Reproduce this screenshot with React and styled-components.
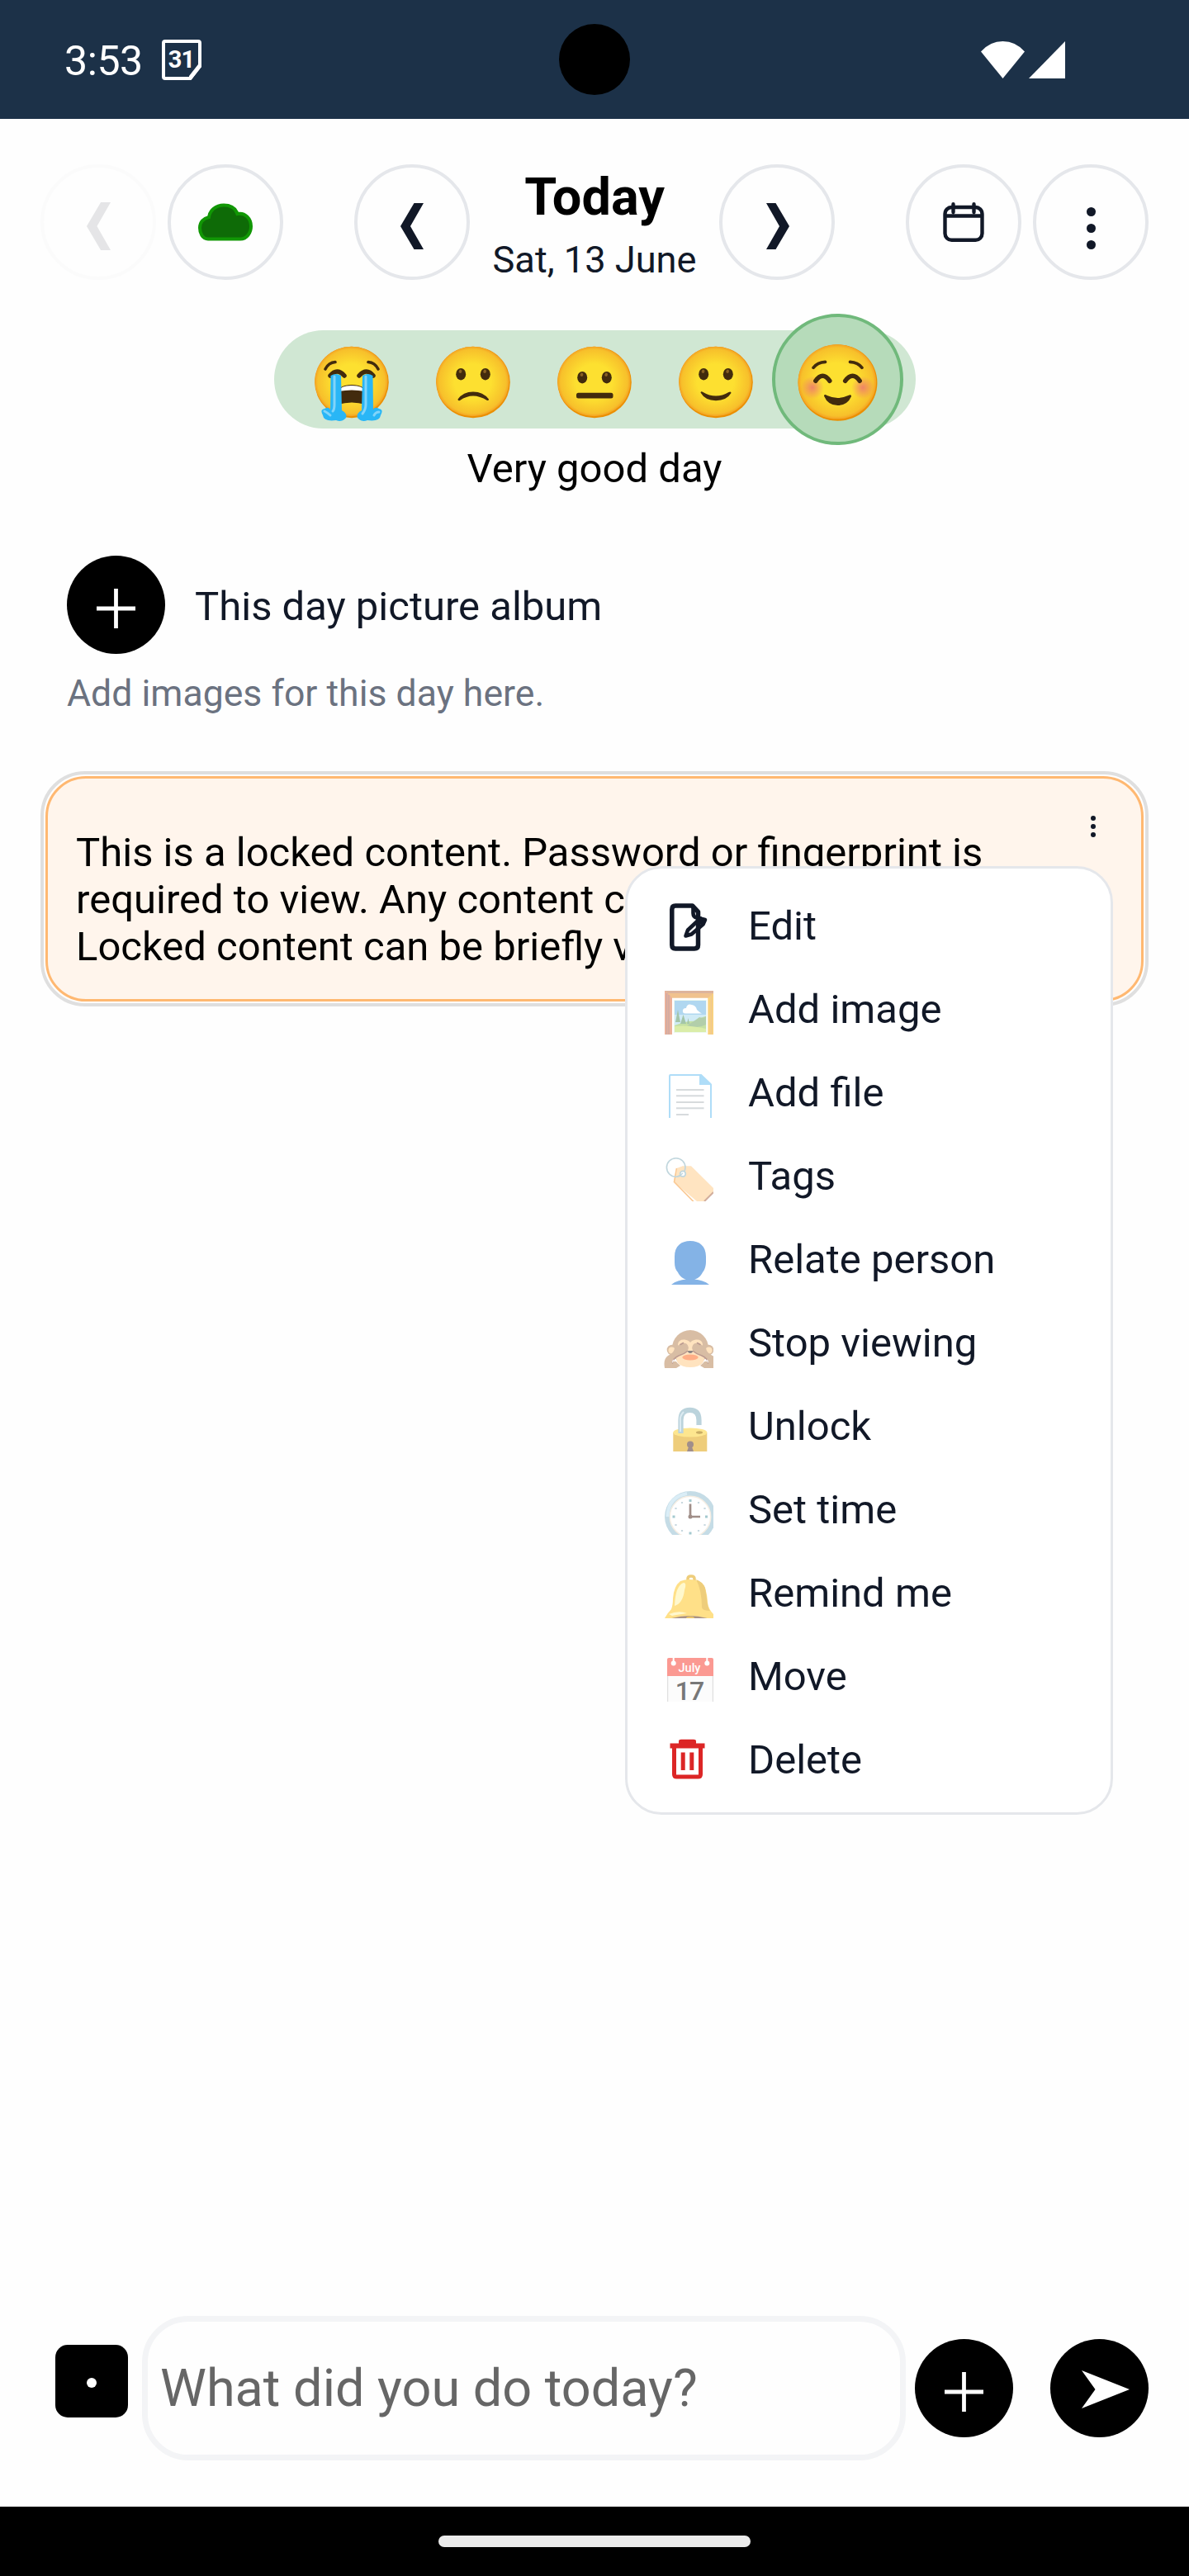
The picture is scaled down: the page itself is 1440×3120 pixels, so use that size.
import React from "react";
import styled, { createGlobalStyle } from "styled-components";

const INK = "#111827";

const GlobalStyle = createGlobalStyle`
  * { box-sizing: border-box; }
  body { margin: 0; background: #fefefe; font-family: Roboto, "Noto Sans", sans-serif; }
  svg { display: block; flex-shrink: 0; }
`;

const Screen = styled.div`
  display: flex;
  flex-direction: column;
  width: 1440px;
  height: 3120px;
  background: #fefefe;
  color: #000;
`;

const StatusBar = styled.header`
  position: relative;
  display: flex;
  align-items: center;
  justify-content: space-between;
  height: 144px;
  padding: 0 150px 0 78px;
  background: #1c3148;
  color: #fff;
`;

const StatusGroup = styled.div`
  display: flex;
  align-items: center;
  gap: ${(p) => p.$gap}px;
`;

const Clock = styled.span`
  padding-top: 4px;
  font-size: 50px;
  line-height: 60px;
  width: 93px;
  white-space: nowrap;
  letter-spacing: -0.4px;
`;

const Camera = styled.div`
  position: absolute;
  left: 677px;
  top: 29px;
  width: 86px;
  height: 86px;
  border-radius: 50%;
  background: #000;
`;

const Main = styled.main`
  flex: 1;
  display: flex;
  flex-direction: column;
  padding: 55px 49px 0;
`;

const TopBar = styled.nav`
  display: flex;
  align-items: flex-start;
  justify-content: space-between;
  height: 153px;
`;

const BarGroup = styled.div`
  display: flex;
  gap: ${(p) => p.$gap || 0}px;
`;

const RoundButton = styled.button`
  display: flex;
  align-items: center;
  justify-content: center;
  flex-shrink: 0;
  width: 140px;
  height: 140px;
  padding: 0;
  border: 4px solid #e5e7eb;
  border-radius: 50%;
  background: transparent;
  opacity: ${(p) => (p.$faded ? 0.1 : 1)};
`;

const DateBlock = styled.div`
  display: flex;
  flex-direction: column;
  align-items: center;
  width: 302px;
  white-space: nowrap;
`;

const DayName = styled.div`
  font-size: 63px;
  line-height: 79px;
  font-weight: 700;
`;

const DayDate = styled.div`
  font-size: 45.2px;
  line-height: 74px;
  color: ${INK};
`;

const MoodBar = styled.section`
  align-self: center;
  display: flex;
  align-items: center;
  justify-content: center;
  width: 777px;
  height: 119px;
  margin-top: 48px;
  border-radius: 60px;
  background: #d0e7d3;
`;

const MoodCell = styled.div`
  display: flex;
  align-items: center;
  justify-content: center;
  width: 147px;
  height: 119px;
  padding-top: ${(p) => (p.$selected ? 0 : 6)}px;
`;

const MoodRing = styled.div`
  display: flex;
  align-items: center;
  justify-content: center;
  flex-shrink: 0;
  width: 159px;
  height: 159px;
  padding-top: 7px;
  border: 4px solid #70b97b;
  border-radius: 50%;
  background: #b6dbba;
`;

const MoodLabel = styled.div`
  margin-top: 19px;
  text-align: center;
  font-size: 49px;
  line-height: 60px;
`;

const AlbumRow = styled.div`
  display: flex;
  align-items: center;
  gap: 36px;
  margin: 75px 0 0 32px;
`;

const BlackCircle = styled.button`
  display: flex;
  align-items: center;
  justify-content: center;
  flex-shrink: 0;
  width: 119px;
  height: 119px;
  padding: ${(p) => p.$drop}px 0 0;
  border: 0;
  border-radius: 50%;
  background: #000;
`;

const AlbumTitle = styled.div`
  padding-top: 5px;
  font-size: 49px;
  line-height: 60px;
  color: ${INK};
`;

const AlbumHint = styled.div`
  margin: 18px 0 0 32px;
  font-size: 44.6px;
  line-height: 60px;
  color: #6b7280;
`;

const LockedCard = styled.article`
  position: relative;
  height: 285px;
  margin-top: 64px;
  padding: 2px;
  border: 4px solid #dfdfdf;
  border-radius: 54px;
  background: #fefefe;
`;

const CardBody = styled.div`
  display: flex;
  align-items: flex-start;
  justify-content: space-between;
  height: 100%;
  padding: 62px 54px 0 34px;
  border: 3.4px solid #ffb871;
  border-radius: 49px;
  background: #fff5ec;
`;

const LockedText = styled.div`
  display: flex;
  flex-direction: column;
  font-size: 49px;
  line-height: 56.8px;
  white-space: nowrap;
`;

const CardDots = styled.div`
  margin-top: -17px;
`;

const Menu = styled.ul`
  position: absolute;
  left: 704px;
  top: 111px;
  width: 591px;
  height: 1149px;
  margin: 0;
  padding: 19px 0 0 44px;
  list-style: none;
  border: 3.5px solid #e5e7eb;
  border-radius: 44px;
  background: #fff;
`;

const MenuItem = styled.li`
  display: flex;
  align-items: center;
  gap: 42px;
  height: 101px;
  font-size: 49px;
  line-height: 60px;
  color: ${INK};
`;

const Composer = styled.footer`
  display: flex;
  align-items: center;
  height: 175px;
  margin-bottom: 56px;
  padding: 0 49px 0 67px;
`;

const RecordBox = styled.div`
  display: flex;
  align-items: center;
  justify-content: center;
  width: 88px;
  height: 88px;
  margin: 0 17px 17px 0;
  padding-top: 3px;
  border-radius: 15px;
  background: #000;
`;

const RecordDot = styled.i`
  width: 12px;
  height: 12px;
  border-radius: 50%;
  background: #fff;
`;

const Field = styled.div`
  width: 925px;
  height: 175px;
  margin-right: 11px;
  padding: 0 15px;
  border: 7px solid #f3f4f6;
  border-radius: 56px;
  font-size: 63px;
  line-height: 161px;
  color: #666;
`;

const SendSlot = styled.div`
  margin-left: 45px;
`;

const NavBar = styled.div`
  display: flex;
  justify-content: center;
  align-items: center;
  height: 84px;
  background: #000;
`;

const NavPill = styled.div`
  width: 378px;
  height: 14px;
  border-radius: 7px;
  background: #ebebeb;
`;

const Chevron = ({ right, size = 56 }) => (
  <svg width={size / 2} height={size} viewBox="0 0 28 56" transform={`translate(${right ? 1 : 0} 5)`}>
    <path
      d={right ? "M0 0H11.5L28 28L11.5 56H0L16 28Z" : "M28 0H16.500L0 28L16.500 56H28L12 28Z"}
      fill={INK}
    />
  </svg>
);

const CloudIcon = () => (
  <svg width="66" height="48" viewBox="0 0 66 48">
    <path
      d="M12 44.500C5 44.500 2 37 2 31C2 24 6.500 19.500 13 18C14 10 21 3.500 31 3.500C40 3.500 45.500 8 47.500 14C57 12 64 20 64 29C64 37 59 44.500 51 44.500Z"
      fill="#0e6b07"
      stroke="#119705"
      strokeWidth="4"
    />
  </svg>
);

const CalendarIcon = () => (
  <svg width="50" height="48" viewBox="0 0 50 48" fill="none" stroke={INK} strokeWidth="4.400">
    <rect x="2.500" y="6" width="45" height="39.800" rx="8" />
    <path d="M3 16.500H47M12.500 2.200V12M37.500 2.200V12" strokeLinecap="round" />
  </svg>
);

const Dots = ({ size, pitch }) => (
  <svg width={size + 1} height={size + pitch * 2} fill={INK}>
    {[0, 1, 2].map((i) => (
      <circle key={i} cx={size / 2} cy={size / 2 + pitch * i} r={size / 2} />
    ))}
  </svg>
);

const Plus = () => (
  <svg width="47" height="48" viewBox="0 0 47 48" stroke="#fff" strokeWidth="4.800">
    <path d="M0 24H47M23.500 0V48" />
  </svg>
);

const Face = ({ id, size, children }) => (
  <svg width={size} height={size} viewBox="0 0 100 100">
    <defs>
      <radialGradient id={id}>
        <stop offset="0.5" stopColor="#fde030" />
        <stop offset="0.92" stopColor="#f7c02b" />
        <stop offset="1" stopColor="#f4a223" />
      </radialGradient>
    </defs>
    <ellipse cx="50" cy="50" rx="44.800" ry="43.200" fill="#eb8f00" />
    <ellipse cx="49.400" cy="49" rx="44.200" ry="42.200" fill={`url(#${id})`} />
    {children}
  </svg>
);

const BROWN = "#422b0d";

const Eyes = ({ y }) => (
  <g>
    {[35.2, 64.8].map((x) => (
      <g key={x}>
        <ellipse cx={x} cy={y} rx="6" ry="7.200" fill={BROWN} />
        <ellipse cx={x - 1.8} cy={y - 3} rx="1.800" ry="2.200" fill="#896024" transform={`rotate(20 ${x} ${y})`} />
      </g>
    ))}
  </g>
);

const CryFace = () => (
  <Face id="cry" size={100}>
    <g fill="none" stroke={BROWN} strokeLinecap="round">
      <path d="M18 34Q22 26 30 25.500M82 34Q78 26 70 25.500" strokeWidth="3.600" />
      <path d="M24 42Q32 32 41 42M59 42Q68 32 76 42" strokeWidth="5.500" />
    </g>
    <path d="M33 77V63Q34 53 50 53Q66 53 67 63V77Q50 72 33 77Z" fill={BROWN} />
    <path d="M34 61Q36 54 50 54Q64 54 66 61Q50 58 34 61Z" fill="#fff" />
    <path d="M24.500 42Q31 38 37 42L38 84Q45 88 43 93Q38 99 31 96Q16 98 15 90Q11 83 17 82Q22 79 24 83Z" fill="#29b6f6" />
    <path d="M75.500 42Q69 38 63 42L62 84Q55 88 57 93Q62 99 69 96Q84 98 85 90Q89 83 83 82Q78 79 76 83Z" fill="#29b6f6" />
    <path d="M29 43V77Q29 83 27 85M67 43V77Q67 83 63 88M17 85Q21 87 24 90M83 86Q79 86 77 90" fill="none" stroke="#81d4fa" strokeWidth="3" strokeLinecap="round" />
  </Face>
);

const SadFace = () => (
  <Face id="sad" size={100}>
    <Eyes y={40.2} />
    <path d="M31.500 70.500Q38 61.500 50 61.500Q62 61.500 69 70.500Q69 72.500 67 72Q58 66.500 50 66.500Q42 66.500 34 72Q31.500 73 31.500 70.500Z" fill={BROWN} />
  </Face>
);

const NeutralFace = () => (
  <Face id="neutral" size={100}>
    <Eyes y={44.2} />
    <rect x="28" y="62.800" width="44.500" height="6.600" rx="2.500" fill={BROWN} />
  </Face>
);

const SmileFace = () => (
  <Face id="smile" size={100}>
    <Eyes y={40.2} />
    <path d="M31.500 62.500Q32 60.500 34.500 62Q42 66.500 50 66.500Q58 66.500 65.500 62Q68.500 60.500 68.500 63Q63 72.200 50 72.200Q37 72.200 31.500 62.500Z" fill={BROWN} />
  </Face>
);

const BlushFace = () => (
  <Face id="blush" size={107}>
    <defs>
      <radialGradient id="cheek">
        <stop offset="0" stopColor="#ed7770" stopOpacity=".85" />
        <stop offset="1" stopColor="#ed7770" stopOpacity="0" />
      </radialGradient>
    </defs>
    <circle cx="21.500" cy="55.500" r="13" fill="url(#cheek)" />
    <circle cx="78.500" cy="55.500" r="13" fill="url(#cheek)" />
    <g fill="none" stroke={BROWN} strokeLinecap="round">
      <path d="M22.500 33Q27 27 36 26.500M77.500 33Q73 27 64 26.500" strokeWidth="3.400" />
      <path d="M25 48Q33 36.500 41 48M58.500 48Q67 36.500 75 48" strokeWidth="5" />
    </g>
    <path d="M34.500 65Q35 62.500 38 64.500Q50 70 62 64.500Q65.500 62.500 65.500 65.500Q61 75.800 50 75.800Q39 75.800 34.500 65Z" fill={BROWN} />
  </Face>
);

const IconBox = styled.svg`
  width: 60px;
  height: 60px;
  overflow: ${(p) => (p.$open ? "visible" : "hidden")};
`;

const ItemIcon = ({ children, faded, open }) => (
  <IconBox viewBox="0 0 60 60" $open={open}>
    <g opacity={faded ? 0.5 : 1}>{children}</g>
  </IconBox>
);

const EditIcon = () => (
  <ItemIcon>
    <g fill="none" stroke={INK} strokeWidth="5.500" strokeLinejoin="round">
      <path d="M34.500 5H14Q9.800 5 9.800 9.500V52.500Q9.800 57 14 57H37Q41.500 57 41.500 52.500V12.500Z" />
      <path d="M35.500 5V14Q35.500 19 40 19.500L45.500 20.500" strokeWidth="4.600" />
      <path d="M44 20.500L50 22L47.500 27.500L33.500 39.500L26.500 41.500L29 34.500Z" strokeWidth="4.600" />
      <path d="M40 25L47 25" strokeWidth="4" />
    </g>
  </ItemIcon>
);

const PictureIcon = () => (
  <ItemIcon faded>
    <path d="M1 7H60V66H1Z" fill="#e2861f" />
    <path d="M1 7H60V10H1Z" fill="#bd6c3b" />
    <path d="M1 7V64H10V16L5 10Z" fill="#db6838" />
    <path d="M3.500 10V60M6 12V60" stroke="#9d574b" strokeWidth="1.500" />
    <path d="M60 10L53 16V60H60Z" fill="#f5a700" />
    <path d="M57.500 12V60" stroke="#e09025" strokeWidth="1.500" />
    <path d="M10 15.800H53.300V60H10Z" fill="#fff" />
    <path d="M12 18H52V58H12Z" fill="#ddf4e1" />
    <path d="M13 19H51V57H13Z" fill="#64b0e2" />
    <path d="M13 36H51V49H13Z" fill="#a2d9ef" />
    <path d="M13 49Q28 43 40 44Q46 38 51 38V57H13Z" fill="#8bc34a" />
    <path d="M28 49Q38 43 43 39Q48 41 51 38V48Q39 54 28 49Z" fill="#689f58" />
    <path d="M13 50Q31 48 51 53V57H13Z" fill="#b7dd55" />
    <path d="M17 30L14 45H20ZM23.500 36L20 47H27ZM29.500 40L28 47H31Z" fill="#4a8c55" />
    <path d="M23 33Q22 28 27 28Q28 22 34 24Q39 25 40 30Q43 33 46 34.500H28Q24 35 23 33Z" fill="#fff" />
  </ItemIcon>
);

const FileIcon = () => (
  <ItemIcon faded>
    <path d="M7 66V9Q7 8 8 8H44L57 20V66Z" fill="#fff" stroke="#62bdf2" strokeWidth="2" />
    <path d="M43 7H45.500L57 18Q58 19 58 20H43Z" fill="#62bdf2" />
    <path d="M15 26H48.500M15 33.300H48.500M15 41H48.500M15 48.300H48.500M15 56H30" stroke="#b0b8bd" strokeWidth="2" />
  </ItemIcon>
);

const TagIcon = () => (
  <ItemIcon faded>
    <path d="M15.300 20L23 17.300H33L62 46L46 65L12 36.500Z" fill="#ffcb85" />
    <path d="M15.500 20L12.500 36.500L37 61.500" fill="none" stroke="#f79329" strokeWidth="1.600" />
    <path d="M60 49L49 60" stroke="#a65f3e" strokeWidth="2" />
    <circle cx="14.700" cy="19" r="11.300" fill="none" stroke="#82aebc" strokeWidth="1.600" />
    <path d="M16 21L14.500 30.200L23 25V17.500Z" fill="#ffcb85" />
    <circle cx="23" cy="26.700" r="3.300" fill="#fff" stroke="#82aebc" strokeWidth="1.700" />
    <path d="M14 30.500Q18 30 23 26" fill="none" stroke="#82aebc" strokeWidth="1.600" />
  </ItemIcon>
);

const PersonIcon = () => (
  <ItemIcon>
    <path d="M32 7C43 7 51 13 51 26V32C51 38 49 43 47 45C44 51 40 53 37 53.500C44 54 50 56 55 60H9C14 56 20 54 27 53.500C24 53 19 50 17 45C14 42 13 38 13 33V26C13 13 21 7 32 7Z" fill="#84b3e6" />
  </ItemIcon>
);

const MonkeyIcon = () => (
  <ItemIcon>
    <g fill="#d8bda4">
      <circle cx="10" cy="38" r="6.300" />
      <circle cx="54" cy="38" r="6.300" />
      <ellipse cx="32" cy="36" rx="22" ry="22" />
    </g>
    <circle cx="9.500" cy="38.500" r="4" fill="#ffe3bf" />
    <circle cx="54.500" cy="38.500" r="4" fill="#ffe3bf" />
    <path d="M17 31Q18 25 25 25.500Q30 26 32 29Q34 26 39 25.500Q46 25 47 31V42Q51 47 47 54Q42 59 32 59Q22 59 17 54Q13 47 17 42Z" fill="#ffe3bf" />
    <path d="M18 32Q24 28 28 31Q32 36 27.500 40.500Q24 43.500 18 45Q11 48 12 52Q15 51 16.500 54L20 57L15 60H1Q-1 49 5 45Q12 42 13 36Z" fill="#d8bda4" />
    <path d="M46 32Q40 28 36 31Q32 36 36.500 40.500Q40 43.500 46 45Q53 48 52 52Q49 51 47.500 54L44 57L49 60H63Q65 49 59 45Q52 42 51 36Z" fill="#d8bda4" />
    <path d="M28.500 39.500Q24 43.500 18 45Q10.500 48.500 10.500 54M35.500 39.500Q40 43.500 46 45Q53.500 48.500 53.500 54M20 31.500L23.500 29.500M44 31.500L40.500 29.500" fill="none" stroke="#bb9a90" strokeWidth="1.500" strokeLinecap="round" />
    <path d="M29 39H35Q35 42 32 42Q29 42 29 39Z" fill="#8c8583" />
    <ellipse cx="32" cy="47" rx="9.700" ry="3.500" fill="#ffae86" />
    <path d="M10.500 54Q9.500 50 12 49.500Q12 52 10.500 54ZM53.500 54Q54.500 50 52 49.500Q52 52 53.500 54Z" fill="#fff" />
  </ItemIcon>
);

const UnlockIcon = () => (
  <ItemIcon>
    <path d="M11.300 37H52.300V60H11.300Z" fill="#eecd7b" />
    <ellipse cx="31.800" cy="37" rx="20.500" ry="5.600" fill="#fde68f" />
    <path d="M20.500 38V22Q20.500 9.800 31.500 9.800Q42.500 9.800 42.500 22V28" fill="none" stroke="#bbd3dc" strokeWidth="6.200" />
    <path d="M20 36V23Q19 17 24 12" fill="none" stroke="#dbeaf1" strokeWidth="2" />
    <ellipse cx="43" cy="37" rx="4" ry="1.700" fill="#c9ad65" />
    <circle cx="32" cy="51.500" r="4" fill="#a08e8b" />
    <path d="M30.500 53H33.500L36 60H28Z" fill="#a08e8b" />
  </ItemIcon>
);

const ClockIcon = () => (
  <ItemIcon>
    <circle cx="32" cy="38" r="31" fill="#c5dce6" />
    <circle cx="32" cy="38" r="24.700" fill="#fff" stroke="#f6eee3" strokeWidth="1.500" />
    <path d="M4.500 38Q5 14 28 10" fill="none" stroke="#daedf6" strokeWidth="4" />
    <path d="M30.500 17H33.500V20H30.500ZM30.500 56.500H33.500V59.500H30.500ZM10.500 36.500H13.500V39.500H10.500ZM50 36.500H53V39.500H50Z" fill="#a4c9cf" />
    <path d="M22 20V22M42 20V22M22 54V56M42 54V56M14.500 27V29M49.500 27V29M14.500 47V49M49.500 47V49" stroke="#c8d8df" strokeWidth="2.200" />
    <path d="M32 22.500V38H44" fill="none" stroke="#a08e88" strokeWidth="2.700" />
    <circle cx="32" cy="38" r="2.500" fill="#a08e88" />
  </ItemIcon>
);

const BellIcon = () => (
  <ItemIcon>
    <path d="M29 16V12Q29 9 33 9Q37 9 37 12V16" fill="none" stroke="#eecd7b" strokeWidth="3.500" />
    <path d="M1 60Q4 54 9 49Q11 44 11 36Q12 21 20 15Q33 10 46 17Q52 23 53 41Q54 49 60 55V61H1Z" fill="#ffe088" />
    <path d="M39 13Q47 16 50 23L52 36Q53 48 56 51Q47 51 46 47Q46 26 39 13Z" fill="#eecd7b" />
    <path d="M13 45Q14 20 24 17Q28 17 25 26Q23 42 13 45ZM6 55Q18 50 28 54Q21 55 10 57Z" fill="#fff8cd" />
    <path d="M6 61Q31 53 56 61Z" fill="#a99388" />
    <ellipse cx="32" cy="60" rx="5" ry="2.500" fill="#e8c36b" />
  </ItemIcon>
);

const JulyIcon = () => (
  <ItemIcon open>
    <path d="M4.500 10H59.500V60H4.500Z" fill="#fcfcfc" />
    <path d="M4.600 28V60M59.400 28V60" stroke="#e0e0e0" strokeWidth="1.300" />
    <path d="M4 29V9Q4 7 6 7H58Q60 7 60 9V29Z" fill="#fb9992" />
    <circle cx="11.700" cy="13.500" r="3" fill="#fff" />
    <circle cx="52.300" cy="13.500" r="3" fill="#fff" />
    <path d="M11.700 7V13M52.300 7V13" stroke="#fff" strokeWidth="2" />
    <text x="31" y="23.500" fontSize="14.500" fontWeight="500" textAnchor="middle" fill="#fff">July</text>
    <text x="31" y="58" fontSize="32" fontWeight="500" textAnchor="middle" letterSpacing="-1" fill="#777">17</text>
  </ItemIcon>
);

const TrashIcon = () => (
  <ItemIcon>
    <path d="M18 9V7Q18 4.700 21 4.700H36Q39 4.700 39 7V9.500H49.500V15.500H7.500V9.500H18Z" fill="#dc2626" />
    <path d="M12.500 14V47Q12.500 50 15.500 50H41.500Q44.500 50 44.500 47V14" fill="none" stroke="#dc2626" strokeWidth="5" />
    <path d="M23.200 20.500V42M33.800 20.500V42" stroke="#dc2626" strokeWidth="5" />
  </ItemIcon>
);

const MENU = [
  ["Edit", EditIcon],
  ["Add image", PictureIcon],
  ["Add file", FileIcon],
  ["Tags", TagIcon],
  ["Relate person", PersonIcon],
  ["Stop viewing", MonkeyIcon],
  ["Unlock", UnlockIcon],
  ["Set time", ClockIcon],
  ["Remind me", BellIcon],
  ["Move", JulyIcon],
  ["Delete", TrashIcon],
];

const MOODS = [CryFace, SadFace, NeutralFace, SmileFace];

export default function App() {
  return (
    <Screen>
      <GlobalStyle />
      <StatusBar>
        <StatusGroup $gap={25}>
          <Clock>3:53</Clock>
          <svg width="48" height="49" viewBox="0 0 48 49">
            <path d="M4 2H44Q46 2 46 4V32L34.500 47H4Q2 47 2 45V4Q2 2 4 2Z" fill="none" stroke="#fff" strokeWidth="4" />
            <path d="M33 48V44L44 30H48V33L36 48Z" fill="#fff" />
            <text x="23.500" y="34" fontSize="29" fontWeight="700" textAnchor="middle" letterSpacing="-1" fill="#fff">31</text>
          </svg>
        </StatusGroup>
        <Camera />
        <StatusGroup $gap={5}>
          <svg width="53" height="45" viewBox="0 0 53 45">
            <path d="M0 12.500Q11 0 26.500 0Q42 0 53 12.500L26.500 45Z" fill="#fff" />
          </svg>
          <svg width="44" height="45" viewBox="0 0 44 45">
            <path d="M44 0V45H0Z" fill="#fff" />
          </svg>
        </StatusGroup>
      </StatusBar>

      <Main>
        <TopBar>
          <BarGroup $gap={14}>
            <RoundButton $faded><Chevron size={58} /></RoundButton>
            <RoundButton><CloudIcon /></RoundButton>
          </BarGroup>
          <BarGroup>
            <RoundButton><Chevron /></RoundButton>
            <DateBlock>
              <DayName>Today</DayName>
              <DayDate>Sat, 13 June</DayDate>
            </DateBlock>
            <RoundButton><Chevron right /></RoundButton>
          </BarGroup>
          <BarGroup $gap={14}>
            <RoundButton><CalendarIcon /></RoundButton>
            <RoundButton>
              <svg width="11" height="66" viewBox="0 -15 11 66" fill={INK}>
                <circle cx="5.500" cy="5.500" r="5.500" />
                <circle cx="5.500" cy="25.500" r="5.500" />
                <circle cx="5.500" cy="45.500" r="5.500" />
              </svg>
            </RoundButton>
          </BarGroup>
        </TopBar>

        <MoodBar>
          {MOODS.map((Mood, i) => (
            <MoodCell key={i}><Mood /></MoodCell>
          ))}
          <MoodCell $selected>
            <MoodRing><BlushFace /></MoodRing>
          </MoodCell>
        </MoodBar>
        <MoodLabel>Very good day</MoodLabel>

        <AlbumRow>
          <BlackCircle $drop={9}><Plus /></BlackCircle>
          <AlbumTitle>This day picture album</AlbumTitle>
        </AlbumRow>
        <AlbumHint>Add images for this day here.</AlbumHint>

        <LockedCard>
          <CardBody>
            <LockedText>
              <span>This is a locked content. Password or fingerprint is</span>
              <span>required to view. Any content c</span>
              <span>Locked content can be briefly v</span>
            </LockedText>
            <CardDots><Dots size={6} pitch={10} /></CardDots>
          </CardBody>
          <Menu>
            {MENU.map(([label, Icon]) => (
              <MenuItem key={label}>
                <Icon />
                {label}
              </MenuItem>
            ))}
          </Menu>
        </LockedCard>
      </Main>

      <Composer>
        <RecordBox><RecordDot /></RecordBox>
        <Field>What did you do today?</Field>
        <BlackCircle $drop={8}><Plus /></BlackCircle>
        <SendSlot>
          <BlackCircle $drop={3}>
            <svg width="58" height="46" viewBox="0 0 58 46" transform="translate(7 0)">
              <path d="M0 0L58 23L0 46L16.500 23Z" fill="#fff" />
            </svg>
          </BlackCircle>
        </SendSlot>
      </Composer>
      <NavBar><NavPill /></NavBar>
    </Screen>
  );
}
